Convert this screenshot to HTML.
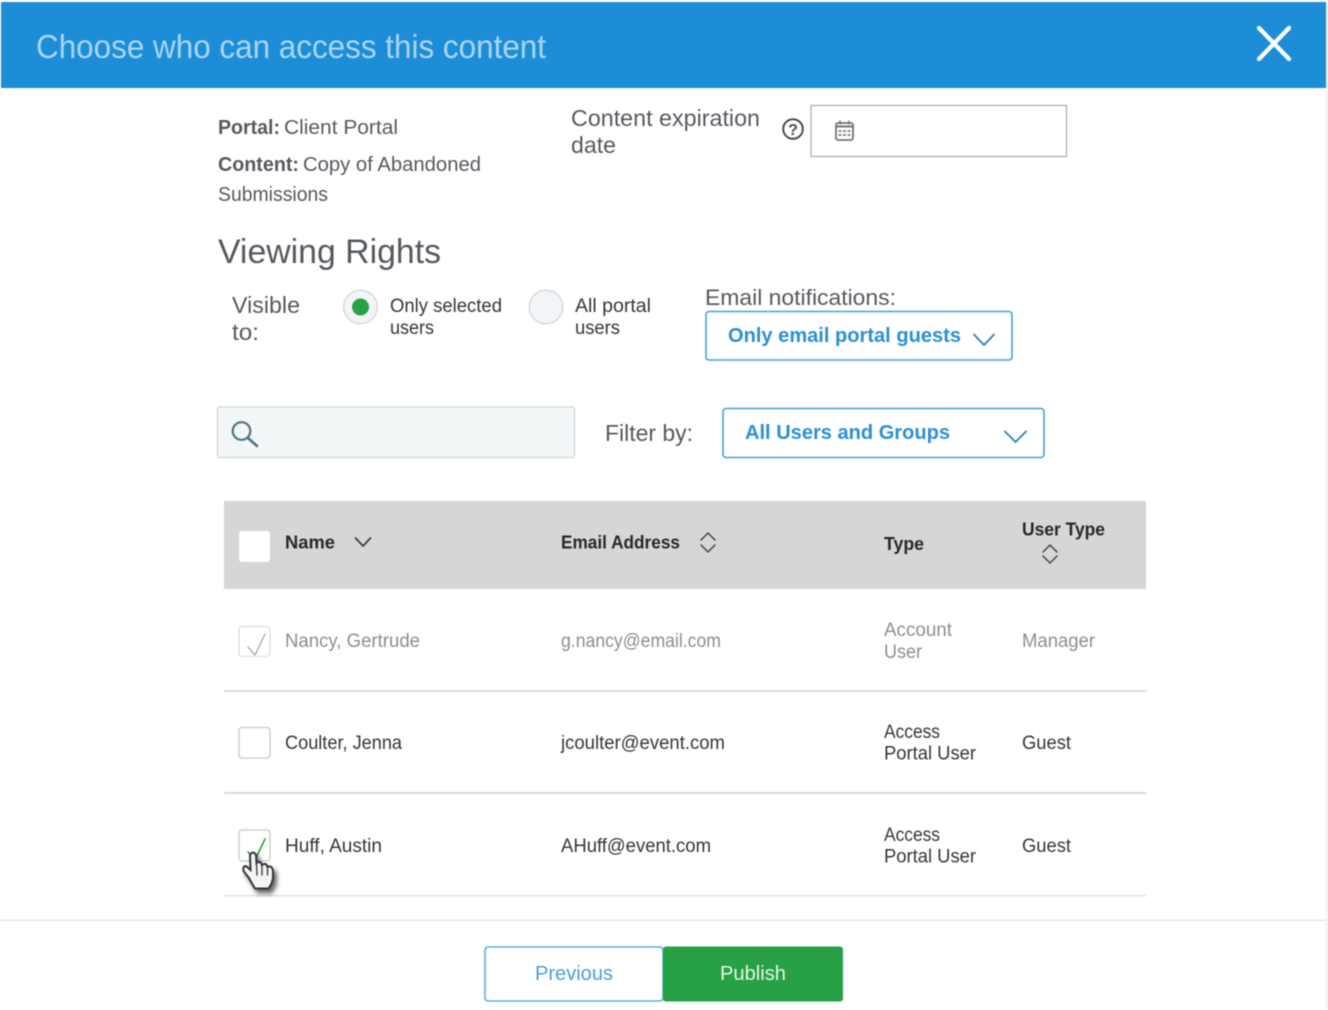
<!DOCTYPE html>
<html lang="en">
<head>
<meta charset="utf-8">
<title>Choose who can access this content</title>
<style>
html,body{margin:0;padding:0;background:#fff;width:1328px;height:1010px;overflow:hidden}
svg{display:block;filter:blur(.45px)}
text{font-family:"Liberation Sans",Arial,sans-serif;fill:#555a60}
.r{font-size:19px;fill:#33363b}
.g{font-size:19px;fill:#8c8e90}
.h{font-size:18px;font-weight:bold;fill:#26282c}
.i{fill:none;stroke-linecap:round;stroke-linejoin:round}
</style>
</head>
<body>
<svg width="1328" height="1010" viewBox="0 0 1328 1010" xmlns="http://www.w3.org/2000/svg">
<rect width="1328" height="1010" fill="#fff"/>
<rect x="1326" y="0" width="2" height="1010" fill="#f1f1f1"/>
<rect x="1" y="2" width="1325" height="86" fill="#1e8dd8"/>
<text x="36" y="58" font-size="33" textLength="510" lengthAdjust="spacingAndGlyphs" style="fill:#a9d5f3">Choose who can access this content</text>
<path class="i" d="M1259 28L1289 59M1289 28L1259 59" stroke="#fff" stroke-width="4.200"/>

<text x="218" y="134" font-size="20" font-weight="bold" textLength="62" lengthAdjust="spacingAndGlyphs">Portal:</text>
<text x="284" y="134" font-size="20" textLength="114" lengthAdjust="spacingAndGlyphs">Client Portal</text>
<text x="218" y="171" font-size="20" font-weight="bold" textLength="81" lengthAdjust="spacingAndGlyphs">Content:</text>
<text x="303" y="171" font-size="20" textLength="178" lengthAdjust="spacingAndGlyphs">Copy of Abandoned</text>
<text x="218" y="201" font-size="20" textLength="110" lengthAdjust="spacingAndGlyphs">Submissions</text>

<text x="571" y="126" font-size="23" textLength="189" lengthAdjust="spacingAndGlyphs">Content expiration</text>
<text x="571" y="153" font-size="23" textLength="45" lengthAdjust="spacingAndGlyphs">date</text>

<circle cx="793" cy="129" r="9.800" fill="none" stroke="#484b4f" stroke-width="2"/>
<text x="793" y="135" font-size="16" font-weight="bold" text-anchor="middle" style="fill:#484b4f">?</text>
<rect x="811" y="105.500" width="255.500" height="51" fill="#fff" stroke="#a9abad" stroke-width="1.200"/>
<g>
<rect x="836" y="123" width="17" height="17" rx="2" fill="#fff" stroke="#70757a" stroke-width="1.800"/>
<path d="M836 126.500h17" stroke="#70757a" stroke-width="2"/>
<path d="M840 120.500v4M849 120.500v4" stroke="#70757a" stroke-width="1.500"/>
<path d="M838.500 131h3M843 131h3M847.500 131h3M838.500 135h3M843 135h3M847.500 135h3" stroke="#8a8e92" stroke-width="2"/>
</g>

<text x="218" y="263" font-size="34" textLength="223" lengthAdjust="spacingAndGlyphs">Viewing Rights</text>
<text x="232" y="313" font-size="23" textLength="68" lengthAdjust="spacingAndGlyphs">Visible</text>
<text x="232" y="340" font-size="23" textLength="27" lengthAdjust="spacingAndGlyphs">to:</text>

<circle cx="360.500" cy="307" r="16.800" fill="#f2f5f7" stroke="#d6d9db" stroke-width="1.500"/>
<circle cx="360.500" cy="307" r="8.500" fill="#27a146"/>
<text x="390" y="312" class="r" textLength="112" lengthAdjust="spacingAndGlyphs">Only selected</text>
<text x="390" y="334" class="r" textLength="44" lengthAdjust="spacingAndGlyphs">users</text>
<circle cx="546" cy="307" r="16.800" fill="#f2f5f7" stroke="#d6d9db" stroke-width="1.500"/>
<text x="575" y="312" class="r" textLength="76" lengthAdjust="spacingAndGlyphs">All portal</text>
<text x="575" y="334" class="r" textLength="45" lengthAdjust="spacingAndGlyphs">users</text>

<text x="705" y="305" font-size="22.500" textLength="191" lengthAdjust="spacingAndGlyphs">Email notifications:</text>
<rect x="706" y="311.500" width="306" height="48.500" rx="3" fill="#fff" stroke="#3ea2dd" stroke-width="1.600"/>
<text x="728" y="342" font-size="20" font-weight="bold" textLength="233" lengthAdjust="spacingAndGlyphs" style="fill:#2a90d6">Only email portal guests</text>
<path class="i" d="M974 334.500L984 345L994 334.500" stroke="#2a7fbd" stroke-width="1.800"/>

<rect x="217.500" y="407" width="357" height="50.500" rx="2" fill="#f2f6f7" stroke="#d0d4d6" stroke-width="1.300"/>
<circle cx="241.500" cy="431" r="8.800" fill="none" stroke="#4f7482" stroke-width="2.200"/>
<path class="i" d="M248 438L257 446" stroke="#4f7482" stroke-width="2.600"/>
<text x="605" y="441" font-size="23" textLength="88" lengthAdjust="spacingAndGlyphs">Filter by:</text>
<rect x="723" y="408.500" width="321" height="49" rx="3" fill="#fff" stroke="#3ea2dd" stroke-width="1.600"/>
<text x="745" y="439" font-size="20" font-weight="bold" textLength="205" lengthAdjust="spacingAndGlyphs" style="fill:#2a90d6">All Users and Groups</text>
<path class="i" d="M1005 431.500L1015.500 442L1026 431.500" stroke="#2a7fbd" stroke-width="1.800"/>

<rect x="224" y="501" width="922" height="88" fill="#d6d6d6"/>
<rect x="239" y="531" width="31" height="31" rx="3" fill="#fff"/>
<text x="285" y="548.500" class="h" textLength="50" lengthAdjust="spacingAndGlyphs">Name</text>
<path class="i" d="M355.500 538L363 546L370.500 538" stroke="#3a3c40" stroke-width="1.700"/>
<text x="561" y="548.500" class="h" textLength="119" lengthAdjust="spacingAndGlyphs">Email Address</text>
<path class="i" d="M701 540L708 533L715 540M701 545L708 552L715 545" stroke="#44474b" stroke-width="1.500"/>
<text x="884" y="550" class="h" textLength="40" lengthAdjust="spacingAndGlyphs">Type</text>
<text x="1022" y="535.500" class="h" textLength="83" lengthAdjust="spacingAndGlyphs">User Type</text>
<path class="i" d="M1043 552L1050 545L1057 552M1043 556L1050 563L1057 556" stroke="#44474b" stroke-width="1.500"/>

<rect x="239" y="626.500" width="31" height="30" rx="3" fill="#fff" stroke="#e2e2e2" stroke-width="1.500"/>
<path class="i" d="M248 647L255 655L265 634" stroke="#a3a5a7" stroke-width="1.300"/>
<text x="285" y="647" class="g" textLength="135" lengthAdjust="spacingAndGlyphs">Nancy, Gertrude</text>
<text x="561" y="647" class="g" textLength="160" lengthAdjust="spacingAndGlyphs">g.nancy@email.com</text>
<text x="884" y="636" class="g" textLength="68" lengthAdjust="spacingAndGlyphs">Account</text>
<text x="884" y="658" class="g" textLength="38" lengthAdjust="spacingAndGlyphs">User</text>
<text x="1022" y="647" class="g" textLength="73" lengthAdjust="spacingAndGlyphs">Manager</text>
<rect x="224" y="690" width="922" height="2" fill="#dcdcdc"/>

<rect x="239" y="727.500" width="31" height="30.500" rx="3" fill="#fff" stroke="#cfcfcf" stroke-width="1.500"/>
<text x="285" y="749" class="r" textLength="117" lengthAdjust="spacingAndGlyphs">Coulter, Jenna</text>
<text x="561" y="749" class="r" textLength="164" lengthAdjust="spacingAndGlyphs">jcoulter@event.com</text>
<text x="884" y="738" class="r" textLength="56" lengthAdjust="spacingAndGlyphs">Access</text>
<text x="884" y="759.500" class="r" textLength="92" lengthAdjust="spacingAndGlyphs">Portal User</text>
<text x="1022" y="749" class="r" textLength="49" lengthAdjust="spacingAndGlyphs">Guest</text>
<rect x="224" y="792" width="922" height="2" fill="#d8d8d8"/>

<rect x="239" y="830" width="31" height="31" rx="3" fill="#fff" stroke="#cfcfcf" stroke-width="1.500"/>
<path class="i" d="M248 852L255 860L265 839" stroke="#27a146" stroke-width="1.600"/>
<text x="285" y="852" class="r" textLength="97" lengthAdjust="spacingAndGlyphs">Huff, Austin</text>
<text x="561" y="852" class="r" textLength="150" lengthAdjust="spacingAndGlyphs">AHuff@event.com</text>
<text x="884" y="841" class="r" textLength="56" lengthAdjust="spacingAndGlyphs">Access</text>
<text x="884" y="862.500" class="r" textLength="92" lengthAdjust="spacingAndGlyphs">Portal User</text>
<text x="1022" y="852" class="r" textLength="49" lengthAdjust="spacingAndGlyphs">Guest</text>
<rect x="224" y="895" width="922" height="1.500" fill="#e0e0e0"/>

<g style="filter:drop-shadow(3px 4px 2.500px rgba(0,0,0,.6))">
<path d="M250 855Q253 850 256 855L256.500 863Q260 860 262 865Q266 862 267.500 867Q272 865 273 871L273 878Q272 884 268.500 888.500L255 888.500Q252 884 249 878L243.500 871Q242.500 866 246 866L250.500 870Z" fill="#f4f4f4" stroke="#34373a" stroke-width="2"/>
<path class="i" d="M256.500 863L257 875M262 865L262 875M267.500 867L267.500 875" stroke="#34373a" stroke-width="1.300"/>
</g>

<rect x="0" y="919.500" width="1326" height="1.500" fill="#e6e6e6"/>
<rect x="485" y="947" width="178" height="54" rx="3" fill="#fff" stroke="#5aaee5" stroke-width="1.600"/>
<text x="535" y="980" font-size="20" textLength="78" lengthAdjust="spacingAndGlyphs" style="fill:#4a9ede">Previous</text>
<rect x="663" y="946.500" width="180" height="55" rx="3" fill="#27a046"/>
<text x="720" y="980" font-size="20" textLength="66" lengthAdjust="spacingAndGlyphs" style="fill:#e8f5e6">Publish</text>
</svg>
</body>
</html>
